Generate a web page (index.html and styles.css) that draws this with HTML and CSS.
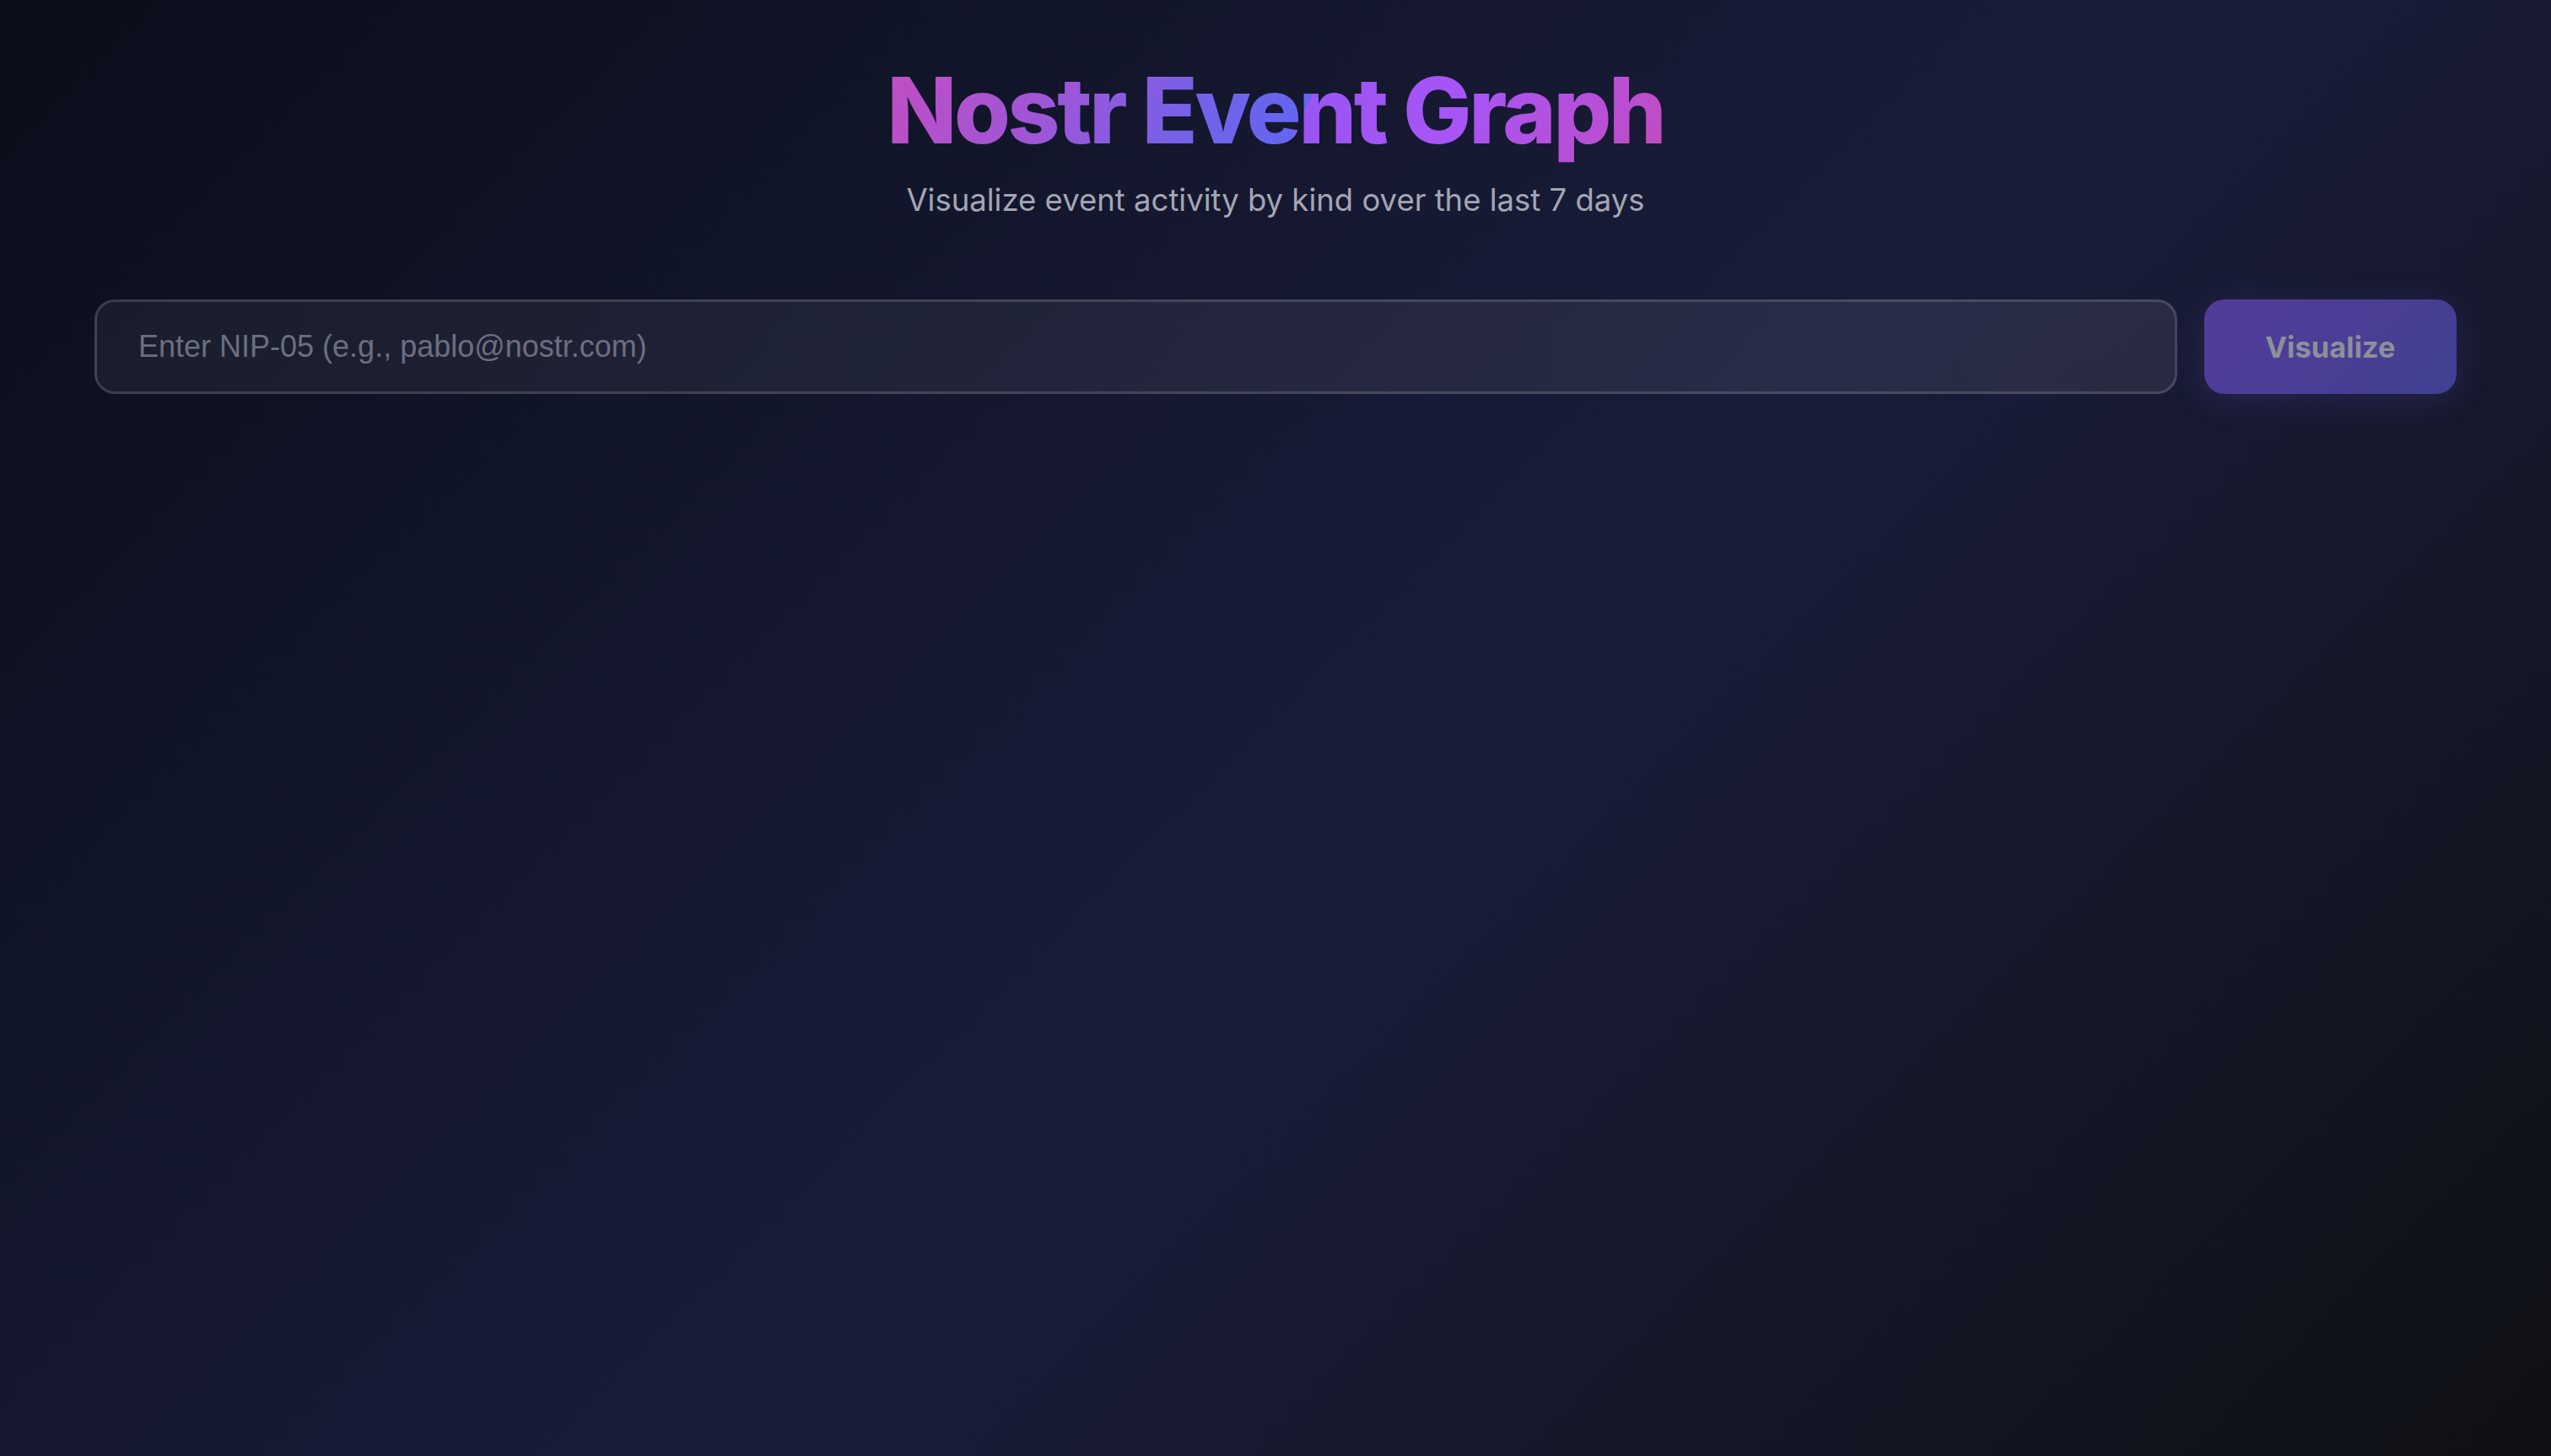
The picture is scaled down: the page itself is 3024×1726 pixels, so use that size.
FILE: index.html
```html
<!DOCTYPE html>
<html lang="en">
<head>
<meta charset="utf-8">
<title>Nostr Event Graph</title>
<link rel="stylesheet" href="styles.css">
</head>
<body>
<main class="page">
  <header class="hero">
    <h1 class="title">Nostr Event Graph</h1>
    <p class="subtitle">Visualize event activity by kind over the last 7 days</p>
  </header>
  <form class="search">
    <input class="search-input" type="text" placeholder="Enter NIP-05 (e.g., pablo@nostr.com)">
    <button class="search-btn" type="button" disabled>Visualize</button>
  </form>
</main>
</body>
</html>
```
FILE: styles.css
```css
html, body {
  margin: 0;
  padding: 0;
}
body {
  min-height: 100vh;
  background: linear-gradient(135deg, #0a0e1a 0%, #1a1d3a 55%, #0f1115 100%);
  font-family: Inter, "Noto Sans", sans-serif;
  color: #e5e7eb;
}
.page {
  padding: 65px 112px 0;
  box-sizing: border-box;
  min-height: 100vh;
}
.hero {
  text-align: center;
}
.title {
  margin: 0;
  font-size: 108px;
  line-height: 132px;
  font-weight: 800;
  letter-spacing: -0.03em;
  display: inline-block;
  background: linear-gradient(115deg, #c24ec2 0%, #9b57d8 24%, #7561e8 40%, #6366f1 53.5%, #9a55f2 53.6%, #a855f7 72%, #c24cc0 100%);
  -webkit-background-clip: text;
  background-clip: text;
  color: transparent;
}
.subtitle {
  margin: 13px 0 0;
  font-size: 36.5px;
  line-height: 54px;
  color: #a3a6b4;
  font-weight: 400;
}
.search {
  margin-top: 91px;
  display: flex;
  gap: 32px;
}
.search-input {
  flex: 1;
  height: 112px;
  box-sizing: border-box;
  border: 3px solid rgba(255, 255, 255, 0.15);
  border-radius: 24px;
  background: linear-gradient(90deg, rgba(255,255,255,0.05), rgba(255,255,255,0.07));
  padding: 0 49px;
  font-family: "Liberation Sans", Arial, sans-serif;
  font-size: 36px;
  color: #e5e7eb;
  outline: none;
}
.search-input::placeholder {
  color: #6b6f80;
}
.search-btn {
  width: 299px;
  height: 112px;
  border: none;
  border-radius: 24px;
  background: linear-gradient(135deg, #533c9b 0%, #4a3e95 55%, #3e4192 100%);
  color: #8d8f9b;
  font-family: Inter, "Noto Sans", sans-serif;
  font-weight: 700;
  font-size: 34.5px;
  box-shadow: 0 8px 40px rgba(99, 80, 220, 0.2);
}
```
